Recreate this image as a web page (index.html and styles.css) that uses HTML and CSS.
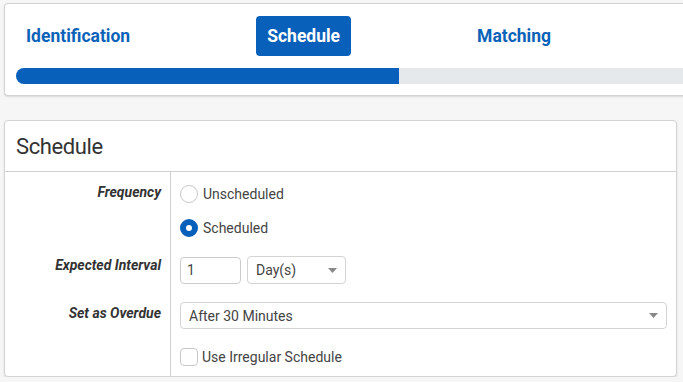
FILE: index.html
```html
<!DOCTYPE html>
<html lang="en">
<head>
    <meta charset="UTF-8">
    <meta name="viewport" content="width=device-width, initial-scale=1.0">
    <title>Schedule</title>
    <link rel="stylesheet" href="styles.css">
</head>
<body>
    <!--wizard steps-->
    <div class="wizard">
        <div class="steps">
            <div class="step">Identification</div>
            <div class="step active">Schedule</div>
            <div class="step">Matching</div>
        </div>
        <div class="progress">
            <div class="progress-fill"></div>
        </div>
    </div>

    <!--schedule panel-->
    <div class="panel">
        <div class="panel-header">Schedule</div>
        <div class="form-grid">
            <div class="label row-freq">Frequency</div>
            <div class="field row-freq">
                <div class="option">
                    <span class="radio"></span>
                    <span>Unscheduled</span>
                </div>
                <div class="option">
                    <span class="radio checked"></span>
                    <span>Scheduled</span>
                </div>
            </div>

            <div class="label row-interval">Expected Interval</div>
            <div class="field row-interval">
                <div class="inline">
                    <div class="text-input">1</div>
                    <div class="select small-select">
                        <span>Day(s)</span>
                        <svg class="caret" width="9" height="5" viewBox="0 0 9 5"><path d="M0 0h9L4.5 5z" fill="#888"/></svg>
                    </div>
                </div>
            </div>

            <div class="label row-overdue">Set as Overdue</div>
            <div class="field row-overdue">
                <div class="select">
                    <span>After 30 Minutes</span>
                    <svg class="caret" width="9" height="5" viewBox="0 0 9 5"><path d="M0 0h9L4.5 5z" fill="#888"/></svg>
                </div>
            </div>

            <div class="label row-irregular"></div>
            <div class="field row-irregular">
                <div class="option check-option">
                    <span class="checkbox"></span>
                    <span>Use Irregular Schedule</span>
                </div>
            </div>
        </div>
    </div>
</body>
</html>
```

FILE: styles.css
```css
html, body {
    overflow: hidden;
}
body {
    font-family: Roboto, "Liberation Sans", Arial, sans-serif;
    background-color: #f6f6f6;
    margin: 0;
    padding: 3px 6px 0 4px;
    color: #333;
}
.wizard {
    background-color: #fff;
    border: 1px solid #d4d4d4;
    border-right: none;
    border-radius: 4px 0 0 4px;
    box-shadow: 0 1px 2px rgba(0, 0, 0, 0.12);
    margin-right: -40px;
    padding: 12px 0 11px 11px;
}
.steps {
    display: flex;
    gap: 115px;
    height: 40px;
    align-items: center;
    margin-left: -1px;
}
.step {
    padding: 0 11px;
    height: 40px;
    line-height: 40px;
    font-size: 17.5px;
    font-weight: 700;
    color: #0a62b9;
    border-radius: 4px;
}
.step.active {
    background-color: #0860ba;
    color: #fff;
}
.progress {
    margin-top: 12px;
    height: 16px;
    background-color: #e6e9ec;
    border-radius: 8px 0 0 8px;
}
.progress-fill {
    width: 383px;
    height: 100%;
    background-color: #0860ba;
    border-radius: 8px 0 0 8px;
}
.panel {
    margin-top: 24px;
    background-color: #fff;
    border: 1px solid #d4d4d4;
    border-radius: 4px;
    box-shadow: 0 1px 2px rgba(0, 0, 0, 0.12);
}
.panel-header {
    height: 50px;
    display: flex;
    align-items: center;
    padding-left: 11px;
    font-size: 22px;
    letter-spacing: -0.4px;
    border-bottom: 1px solid #d0d0d0;
}
.form-grid {
    display: grid;
    grid-template-columns: 166px 1fr;
}
.label {
    font-size: 14px;
    line-height: 17px;
    font-weight: 700;
    font-style: italic;
    text-align: right;
    padding-right: 9px;
    border-right: 1px solid #d0d0d0;
}
.field {
    padding: 0 9px 0 9px;
    font-size: 14px;
    color: #444;
}
.label.row-freq { padding-top: 12px; }
.field.row-freq { padding-top: 5px; }
.label.row-interval { padding-top: 12px; }
.field.row-interval { padding-top: 11px; padding-bottom: 9px; }
.label.row-overdue { padding-top: 12px; }
.field.row-overdue { padding-top: 9px; }
.field.row-irregular { padding-top: 19px; padding-bottom: 10px; }
.option {
    display: flex;
    align-items: center;
    height: 34px;
    gap: 5px;
}
.check-option {
    height: 18px;
    gap: 4px;
}
.radio {
    width: 16px;
    height: 16px;
    border: 1px solid #c8c8c8;
    border-radius: 50%;
    box-sizing: content-box;
    background-color: #fff;
}
.radio.checked {
    width: 6px;
    height: 6px;
    border: 6px solid #0860ba;
    background-color: #fff;
}
.checkbox {
    width: 16px;
    height: 16px;
    border: 1px solid #c8c8c8;
    border-radius: 4px;
}
.inline {
    display: flex;
    gap: 6px;
    align-items: center;
}
.text-input {
    width: 53px;
    height: 25px;
    line-height: 25px;
    padding-left: 6px;
    border: 1px solid #ccc;
    border-radius: 4px;
}
.select {
    height: 25px;
    border: 1px solid #d4d4d4;
    border-radius: 4px;
    display: flex;
    align-items: center;
    justify-content: space-between;
    padding: 0 8px 0 8px;
}
.small-select {
    width: 81px;
    height: 26px;
}
.caret {
    display: block;
}
```
